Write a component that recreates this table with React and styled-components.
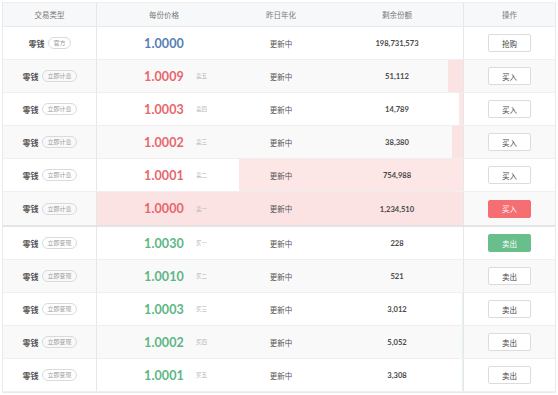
import React from "react";
import styled, { createGlobalStyle, css } from "styled-components";

const Global = createGlobalStyle`
  html, body { margin: 0; padding: 0; background: #fff; }
  body { font-family: Lato, "Noto Sans CJK SC", sans-serif; }
`;

const Page = styled.div`
  padding: 2px;
  width: 558px;
  box-sizing: border-box;
`;

const Table = styled.div`
  width: 554px;
  box-sizing: border-box;
  border: 1px solid #e9eaec;
  border-top: none;
`;

const cols = css`
  display: grid;
  grid-template-columns: 94px 134px 100px 132px 92px;
`;

const HeadRow = styled.div`
  ${cols};
  height: 25px;
  background: #f7f8f9;
  border-bottom: 1px solid #e9eaec;
  border-top: 1px solid #f0f0f0;
  box-sizing: border-box;
`;

const HeadCell = styled.div`
  display: flex;
  align-items: center;
  justify-content: center;
  font-family: "Noto Sans CJK SC", sans-serif;
  font-size: 7.5px;
  color: #7a7a7a;
  box-sizing: border-box;
  ${(p) => p.$right && "border-right: 1px solid #e6e7e9;"}
  ${(p) => p.$left && "border-left: 1px solid #e6e7e9;"}
`;

const Row = styled.div`
  ${cols};
  position: relative;
  height: ${(p) => (p.$split ? 35 : 33)}px;
  background: ${(p) => (p.$alt ? "#f9f9f9" : "#fff")};
  border-bottom: ${(p) => (p.$split ? "2px solid #e4e4e4" : "1px solid #efefef")};
  box-sizing: border-box;
`;

const Bar = styled.div`
  position: absolute;
  top: 0;
  bottom: 0;
  right: 92px;
  background: ${(p) => (p.$side === "sell" ? "#fce6e6" : "#e2f3e9")};
  ${(p) => p.$alt && p.$side === "sell" && "background: #fbe3e3;"}
`;

const Cell = styled.div`
  position: relative;
  z-index: 1;
  display: flex;
  align-items: center;
  justify-content: center;
  box-sizing: border-box;
  ${(p) => p.$right && "border-right: 1px solid #e6e7e9;"}
  ${(p) => p.$left && "border-left: 1px solid #e6e7e9;"}
`;

const TypeName = styled.span`
  font-family: "Noto Sans CJK SC", sans-serif;
  font-weight: 700;
  font-size: 8px;
  color: #555;
`;

const Tag = styled.span`
  margin-left: 4px;
  height: 12px;
  padding: 0 4px;
  border: 1px solid #dadada;
  border-radius: 6px;
  font-family: "Noto Sans CJK SC", sans-serif;
  font-size: 6px;
  color: #9a9a9a;
  display: inline-flex;
  align-items: center;
  line-height: 1;
  box-sizing: border-box;
`;

const PriceCell = styled.div`
  position: relative;
  z-index: 1;
  display: grid;
  grid-template-columns: 1fr auto 1fr;
  align-items: center;
`;

const Price = styled.span`
  grid-column: 2;
  font-family: Lato, sans-serif;
  font-weight: 700;
  font-size: 12.5px;
  letter-spacing: 0.1px;
  color: ${(p) => p.$color};
`;

const Level = styled.span`
  grid-column: 3;
  justify-self: start;
  margin-left: 12px;
  font-family: "Noto Sans CJK SC", sans-serif;
  font-size: 5.5px;
  color: #b5b5b5;
`;

const Plain = styled.span`
  font-family: "Noto Sans CJK SC", sans-serif;
  font-size: 7.5px;
  color: #555;
`;

const Amount = styled.span`
  font-family: Lato, sans-serif;
  font-weight: 700;
  font-size: 7.6px;
  color: #4a4a4a;
`;

const Button = styled.button`
  width: 43px;
  height: 18px;
  border-radius: 2px;
  font-family: "Noto Sans CJK SC", sans-serif;
  font-size: 7.5px;
  padding: 0;
  cursor: pointer;
  ${(p) =>
    p.$variant === "sell"
      ? "background:#f46e72;border:1px solid #f46e72;color:#fff;"
      : p.$variant === "buy"
      ? "background:#68bf8c;border:1px solid #68bf8c;color:#fff;"
      : "background:#fff;border:1px solid #dcdcdc;color:#444;"}
`;

const rows = [
  { tag: "官方", price: "1.0000", color: "#5580b6", amount: 198731573, btn: "抢购" },
  { tag: "立即计息", price: "1.0009", level: "卖五", color: "#e8666a", amount: 51112, side: "sell", btn: "买入" },
  { tag: "立即计息", price: "1.0003", level: "卖四", color: "#e8666a", amount: 14789, side: "sell", btn: "买入" },
  { tag: "立即计息", price: "1.0002", level: "卖三", color: "#e8666a", amount: 38380, side: "sell", btn: "买入" },
  { tag: "立即计息", price: "1.0001", level: "卖二", color: "#e8666a", amount: 754988, side: "sell", btn: "买入" },
  { tag: "立即计息", price: "1.0000", level: "卖一", color: "#e8666a", amount: 1234510, side: "sell", btn: "买入", variant: "sell", split: true },
  { tag: "立即变现", price: "1.0030", level: "买一", color: "#5db683", amount: 228, side: "buy", btn: "卖出", variant: "buy" },
  { tag: "立即变现", price: "1.0010", level: "买二", color: "#5db683", amount: 521, side: "buy", btn: "卖出" },
  { tag: "立即变现", price: "1.0003", level: "买三", color: "#5db683", amount: 3012, side: "buy", btn: "卖出" },
  { tag: "立即变现", price: "1.0002", level: "买四", color: "#5db683", amount: 5052, side: "buy", btn: "卖出" },
  { tag: "立即变现", price: "1.0001", level: "买五", color: "#5db683", amount: 3308, side: "buy", btn: "卖出" },
];

const maxDepth = Math.max(...rows.filter((r) => r.side).map((r) => r.amount));
const BAR_SPAN = 366;

export default function App() {
  return (
    <Page>
      <Global />
      <Table>
        <HeadRow>
          <HeadCell $right>交易类型</HeadCell>
          <HeadCell>每份价格</HeadCell>
          <HeadCell>昨日年化</HeadCell>
          <HeadCell>剩余份额</HeadCell>
          <HeadCell $left>操作</HeadCell>
        </HeadRow>
        {rows.map((r, i) => (
          <Row key={i} $alt={i % 2 === 1} $split={r.split}>
            {r.side && (
              <Bar
                $side={r.side}
                $alt={i % 2 === 1}
                style={{ width: `${(BAR_SPAN * r.amount) / maxDepth}px` }}
              />
            )}
            <Cell $right>
              <TypeName>零钱</TypeName>
              <Tag>{r.tag}</Tag>
            </Cell>
            <PriceCell>
              <Price $color={r.color}>{r.price}</Price>
              {r.level && <Level>{r.level}</Level>}
            </PriceCell>
            <Cell>
              <Plain>更新中</Plain>
            </Cell>
            <Cell>
              <Amount>{r.amount.toLocaleString("en-US")}</Amount>
            </Cell>
            <Cell $left>
              <Button $variant={r.variant}>{r.btn}</Button>
            </Cell>
          </Row>
        ))}
      </Table>
    </Page>
  );
}
